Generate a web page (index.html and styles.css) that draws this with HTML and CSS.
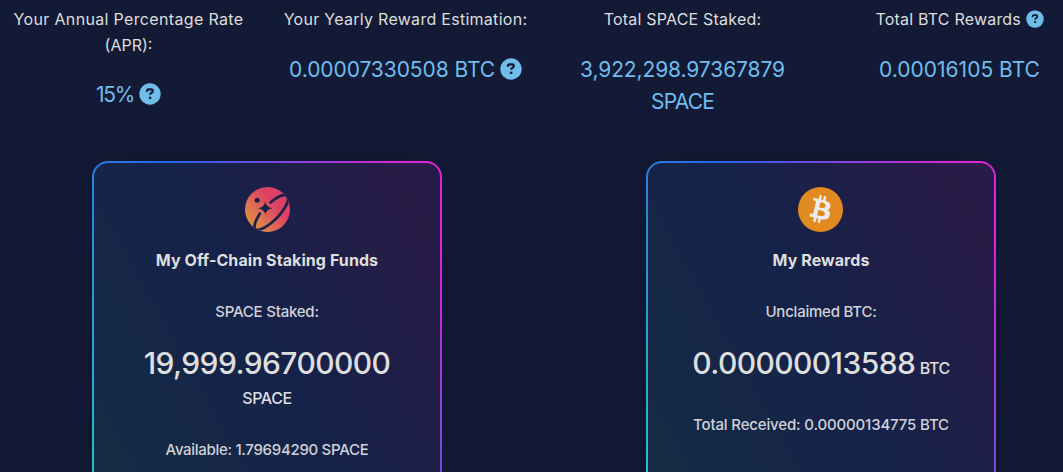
FILE: index.html
```html
<!DOCTYPE html>
<html lang="en">
<head>
    <meta charset="UTF-8">
    <meta name="viewport" content="width=device-width, initial-scale=1.0">
    <title>Staking</title>
    <link rel="stylesheet" href="styles.css">
</head>
<body>
    <main class="page">
        <!-- stats -->
        <section class="stats">
            <div class="stat">
                <p class="label"><span class="t-apr">Your Annual Percentage Rate</span> <span class="t-apr2">(APR):</span></p>
                <p class="value"><span class="v-apr">15%</span> <svg class="help" viewBox="0 0 22 22"><circle cx="11" cy="11" r="10.7"/><path d="M8 8.8V7.9Q8 6.3 9.6 6.3h2.7q1.5 0 1.5 1.6 0 1.3-1.3 1.9-1.3.6-1.3 2"/><rect x="9.9" y="13.7" width="2.4" height="2.2"/></svg></p>
            </div>
            <div class="stat">
                <p class="label"><span class="t-year">Your Yearly Reward Estimation:</span></p>
                <p class="value"><span class="v-year">0.00007330508 BTC</span> <svg class="help" viewBox="0 0 22 22"><circle cx="11" cy="11" r="10.7"/><path d="M8 8.8V7.9Q8 6.3 9.6 6.3h2.7q1.5 0 1.5 1.6 0 1.3-1.3 1.9-1.3.6-1.3 2"/><rect x="9.9" y="13.7" width="2.4" height="2.2"/></svg></p>
            </div>
            <div class="stat">
                <p class="label"><span class="t-total">Total SPACE Staked:</span></p>
                <p class="value"><span class="v-total">3,922,298.97367879</span> <span class="v-space">SPACE</span></p>
            </div>
            <div class="stat">
                <p class="label"><span class="t-btc">Total BTC Rewards</span> <svg class="help small" viewBox="0 0 22 22"><circle cx="11" cy="11" r="10.7"/><path d="M8 8.8V7.9Q8 6.3 9.6 6.3h2.7q1.5 0 1.5 1.6 0 1.3-1.3 1.9-1.3.6-1.3 2"/><rect x="9.9" y="13.7" width="2.4" height="2.2"/></svg></p>
                <p class="value"><span class="v-btc">0.00016105 BTC</span></p>
            </div>
        </section>

        <!-- cards -->
        <section class="cards">
            <article class="card funds">
                <svg class="coin" viewBox="0 0 45 45">
                    <defs>
                        <linearGradient id="planet" x1="0.1" y1="0.85" x2="0.65" y2="0.35">
                            <stop offset="0.15" stop-color="#df8747"/>
                            <stop offset="1" stop-color="#dc4067"/>
                        </linearGradient>
                        <clipPath id="disc"><circle cx="22.5" cy="22.5" r="22.5"/></clipPath>
                    </defs>
                    <circle cx="22.5" cy="22.5" r="22.5" fill="url(#planet)"/>
                    <g clip-path="url(#disc)">
                        <circle class="dark" cx="12.2" cy="13.2" r="2.5"/>
                        <path class="dark" d="M20.3 14.2Q21 20.3 27.7 21.2 21 22.1 20.3 28.2 19.6 22.1 12.8 21.2 19.6 20.3 20.3 14.2Z"/>
                        <path class="ring" d="M25.5 15.5C32.5 9.7 39.5 6.4 42 9.1 46 14 36.5 28 25 37 17.5 42.8 11.3 44.2 9.9 41.5 8.7 38.8 10.5 33.5 14.8 26.7"/>
                    </g>
                </svg>
                <h2>My Off-Chain Staking Funds</h2>
                <p class="caption">SPACE Staked:</p>
                <p class="amount">19,999.96700000 <small>SPACE</small></p>
                <p class="note">Available: 1.79694290 SPACE</p>
            </article>
            <article class="card rewards">
                <svg class="coin" viewBox="0 0 64 64">
                    <circle cx="32" cy="32" r="32" fill="#e18a20"/>
                    <path fill="#ebebeb" d="M46.1 27.4c.6-4.3-2.6-6.5-7-8l1.4-5.7-3.5-.9-1.4 5.6-2.8-.7 1.4-5.6-3.5-.9-1.4 5.7-2.2-.5-4.8-1.2-.9 3.7s2.6.6 2.5.6c1.4.4 1.7 1.3 1.6 2.1l-3.9 15.7c-.2.4-.6 1.1-1.6.8l-2.5-.6-1.8 4.1 4.6 1.1 2.5.6-1.5 5.8 3.5.9 1.4-5.7 2.8.7-1.4 5.7 3.5.9 1.5-5.8c6 1.1 10.5.7 12.4-4.8 1.5-4.4-.1-6.9-3.3-8.5 2.4-.5 4.1-2.1 4.6-5.1ZM38.1 38.6c-1.1 4.4-8.4 2-10.8 1.4l1.9-7.7c2.4.6 10 1.8 8.9 6.3Zm1.1-11.3c-1 4-7.1 2-9.1 1.5l1.8-7c2 .5 8.4 1.4 7.3 5.5Z"/>
                </svg>
                <h2>My Rewards</h2>
                <p class="caption">Unclaimed BTC:</p>
                <p class="amount">0.00000013588 <small>BTC</small></p>
                <p class="note">Total Received: 0.00000134775 BTC</p>
            </article>
        </section>
    </main>
</body>
</html>
```

FILE: styles.css
```css
* {
    box-sizing: border-box;
}

body {
    margin: 0;
    height: 472px;
    overflow: hidden;
    background-color: #131a35;
    color: #dedede;
    font-family: Inter, "Liberation Sans", sans-serif;
}

p, h2 {
    margin: 0;
}

.page {
    width: 1108px;
    margin-left: -10px;
    padding-top: 7px;
}

.stats {
    display: grid;
    grid-template-columns: repeat(4, 277px);
    height: 154px;
    text-align: center;
}

.stat {
    padding: 0 12px;
}

.label {
    font-size: 16px;
    line-height: 25.6px;
}

.value {
    margin-top: 21px;
    font-size: 21px;
    line-height: 32px;
    color: #70bdf0;
}

.t-apr {
    letter-spacing: 0.34px;
}

.t-year {
    letter-spacing: 0.28px;
}

.t-total,
.t-btc {
    letter-spacing: 0.2px;
}

.v-apr {
    letter-spacing: -1.2px;
}

.v-year {
    letter-spacing: -0.08px;
}

.v-total {
    letter-spacing: -0.1px;
}

.v-space {
    letter-spacing: -0.8px;
}

.value .help {
    margin-left: -1px;
}

.help {
    width: 22px;
    height: 22px;
    vertical-align: -3px;
    fill: #70bdea;
}

.help path {
    fill: none;
    stroke: #131a35;
    stroke-width: 2.2;
}

.help rect {
    fill: #131a35;
}

.help.small {
    width: 18px;
    height: 18px;
    vertical-align: -3px;
}

.cards {
    display: grid;
    grid-template-columns: 554px 554px;
    justify-items: center;
}

.card {
    width: 350px;
    height: 420px;
    padding-top: 24px;
    border: 2px solid transparent;
    border-radius: 16px;
    text-align: center;
    background:
        linear-gradient(rgba(19, 26, 53, 0.89), rgba(19, 26, 53, 0.89)) padding-box,
        linear-gradient(61deg, #2dd4bf, #2563eb 53%, #d926d9 92%) border-box;
    box-shadow: 0 0 18px rgba(0, 0, 0, 0.2);
}

.coin {
    display: block;
    width: 45px;
    height: 45px;
    margin: 0 auto;
}

.dark {
    fill: #1a224a;
}

.ring {
    fill: none;
    stroke: #1a224a;
    stroke-width: 2.7;
    stroke-linecap: round;
}

.card h2 {
    margin-top: 15px;
    font-size: 16px;
    font-weight: 700;
    line-height: 26px;
    letter-spacing: 0.08px;
}

.caption {
    margin-top: 27px;
    font-size: 15px;
    line-height: 24px;
    font-weight: 500;
    letter-spacing: -0.22px;
    color: #d0d2d8;
}

.amount {
    margin-top: 18px;
    font-size: 30px;
    font-weight: 550;
    line-height: 42px;
    letter-spacing: -0.58px;
}

.amount small {
    font-size: 16px;
    line-height: 28px;
    font-weight: 450;
    letter-spacing: -0.4px;
}

.funds small {
    display: block;
}

.rewards small {
    margin-left: -3px;
}

.note {
    margin-top: 26px;
    font-size: 15px;
    line-height: 24px;
    font-weight: 500;
    letter-spacing: -0.3px;
    color: #d0d2d8;
}

.rewards .coin {
    margin-left: 150px;
}

.rewards .note {
    margin-top: 29px;
    letter-spacing: -0.15px;
}
```
